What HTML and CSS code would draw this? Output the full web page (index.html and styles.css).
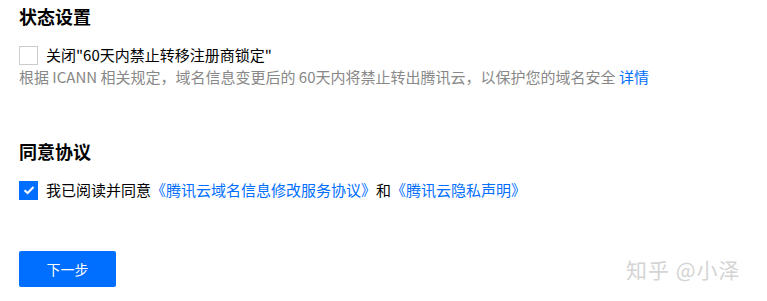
FILE: index.html
```html
<!DOCTYPE html>
<html>
  <head>
    <meta charset="utf-8">
    <title>域名信息修改</title>
    <link rel="stylesheet" href="styles.css">
  </head>
  <body>
    <div class="page">
      <div class="section">
        <h2>状态设置</h2>
        <label class="check">
          <span class="box"></span>
          <span>关闭"60天内禁止转移注册商锁定"</span>
        </label>
        <p class="hint">根据 ICANN 相关规定，域名信息变更后的 60天内将禁止转出腾讯云，以保护您的域名安全 <a href="#">详情</a></p>
      </div>
      <div class="section agree">
        <h2>同意协议</h2>
        <label class="check">
          <span class="box checked">
            <svg width="12" height="10" viewBox="0 0 12 10"><path d="M1.5 5.2 L4.6 8 L10.5 2" fill="none" stroke="#fff" stroke-width="2"/></svg>
          </span>
          <span>我已阅读并同意<a href="#">《腾讯云域名信息修改服务协议》</a>和<a href="#">《腾讯云隐私声明》</a></span>
        </label>
      </div>
      <button class="next">下一步</button>
    </div>
    <div class="mark">知乎 @小泽</div>
  </body>
</html>
```
FILE: styles.css
```css
body {
  margin: 0;
  background: #fff;
  font-family: "Noto Sans CJK SC", "Noto Sans", sans-serif;
  font-size: 15px;
  color: #000;
}
.page {
  padding: 4px 19px 0;
}
h2 {
  font-size: 18px;
  font-weight: bold;
  margin: 0;
  line-height: 24px;
}
.check {
  display: flex;
  align-items: center;
  gap: 8px;
  margin-top: 17px;
  line-height: 20px;
}
.box {
  width: 17px;
  height: 17px;
  border: 1px solid #ccc;
  display: flex;
  align-items: center;
  justify-content: center;
}
.box.checked {
  background: #006eff;
  border-color: #006eff;
}
.hint {
  margin: 2px 0 0;
  color: #888;
  line-height: 20px;
}
a {
  color: #006eff;
  text-decoration: none;
}
.agree {
  margin-top: 52px;
}
.next {
  margin-top: 51px;
  width: 97px;
  height: 36px;
  background: #006eff;
  color: #fff;
  border: none;
  border-radius: 2px;
  font-family: inherit;
  font-size: 14px;
}
.mark {
  position: absolute;
  left: 626px;
  top: 254px;
  font-size: 21px;
  color: #d4d4d4;
  letter-spacing: 1px;
}
```
